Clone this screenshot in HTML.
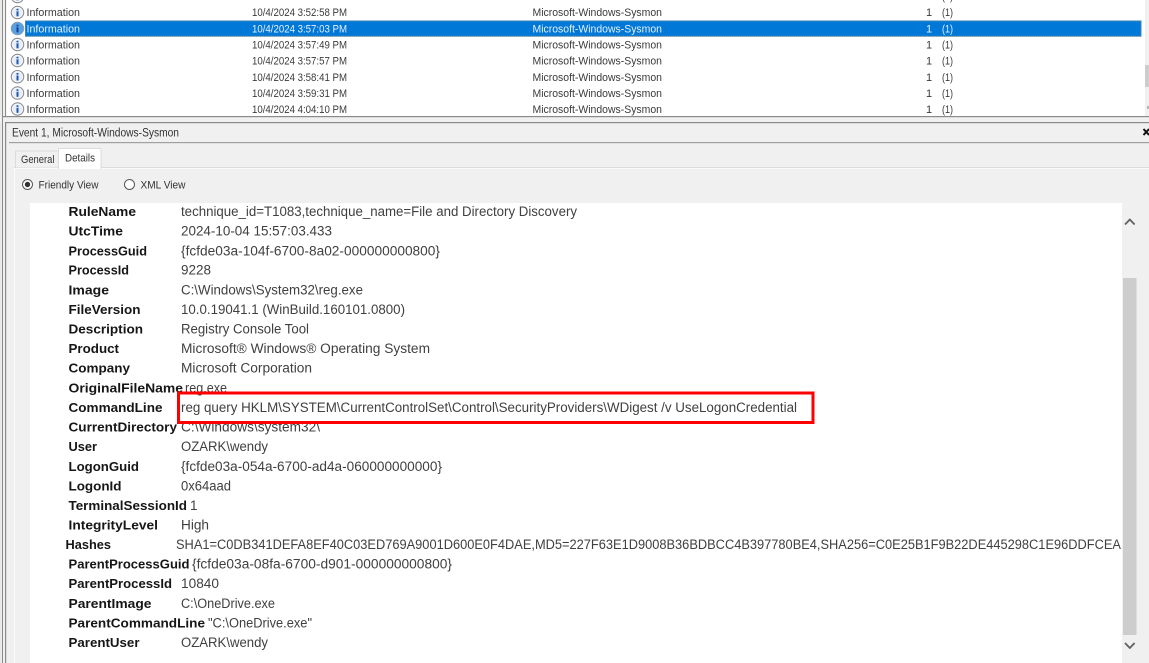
<!DOCTYPE html>
<html>
<head>
<meta charset="utf-8">
<style>
html,body{margin:0;padding:0;background:#f0f0f0;width:1149px;height:663px;overflow:hidden}
svg{display:block;position:absolute;left:0;top:0;filter:blur(.3px)}
text{font-family:"Liberation Sans",sans-serif}
.l text{font-size:11px;fill:#3a3a3a}
.s text{fill:#e4f0fb}
.k text{font-size:13px;font-weight:bold;fill:#161616}
.v text{font-size:13.5px;fill:#404040}
.t{font-size:11px;fill:#333}
</style>
</head>
<body>
<svg width="1149" height="663" viewBox="0 0 1149 663" xmlns="http://www.w3.org/2000/svg">
<defs>
<g id="ic">
<circle cx="0" cy="0" r="6.2" fill="#f7f9fc" stroke="#8b8f94" stroke-width="1.1"/>
<circle cx="0" cy="0" r="4.6" fill="#e6eef8"/>
<rect x="-1" y="-1.2" width="2" height="5" fill="#1f55b0"/>
<rect x="-1" y="-3.7" width="2" height="1.6" fill="#1f55b0"/>
</g>
<g id="ics">
<circle cx="0" cy="0" r="6.2" fill="#5a9fe0" stroke="#7f9fc4" stroke-width="1.1"/>
<rect x="-1" y="-1.2" width="2" height="5" fill="#123f95"/>
<rect x="-1" y="-3.7" width="2" height="1.6" fill="#123f95"/>
</g>
</defs>

<!-- window base -->
<rect width="1149" height="663" fill="#f0f0f0"/>
<rect x="0" y="0" width="1.5" height="663" fill="#e8e8e8"/>
<rect x="2" y="0" width="1" height="663" fill="#8a8a8a"/>
<rect x="5" y="0" width="1.2" height="663" fill="#8a8a8a"/>

<!-- list area -->
<rect x="6.2" y="0" width="1142.8" height="116" fill="#fff"/>
<rect x="1145" y="0" width="4" height="116" fill="#f0f0f0"/>
<rect x="1145" y="65" width="4" height="22" fill="#cdcdcd"/>
<rect x="1147" y="106" width="2" height="3" fill="#b5b5b5"/>
<rect x="25" y="20.5" width="1116.5" height="16.2" fill="#0078d7"/>
<rect x="25.5" y="21" width="1115.5" height="15.2" fill="none" stroke="#e8a04a" stroke-width="0.6" stroke-dasharray="1 1"/>

<use href="#ic" x="17.5" y="-3.5"/>
<use href="#ic" x="17.5" y="12.5"/>
<use href="#ics" x="17.5" y="28.5"/>
<use href="#ic" x="17.5" y="44.5"/>
<use href="#ic" x="17.5" y="60.5"/>
<use href="#ic" x="17.5" y="76.7"/>
<use href="#ic" x="17.5" y="93"/>
<use href="#ic" x="17.5" y="109"/>

<g class="l">
<text x="942" y="-0.2" textLength="11" lengthAdjust="spacingAndGlyphs">(1)</text>
<text x="26.5" y="16" textLength="53.5" lengthAdjust="spacingAndGlyphs">Information</text>
<text x="252" y="16" textLength="95" lengthAdjust="spacingAndGlyphs">10/4/2024 3:52:58 PM</text>
<text x="532.5" y="16" textLength="129.5" lengthAdjust="spacingAndGlyphs">Microsoft-Windows-Sysmon</text>
<text x="926" y="16">1</text><text x="942" y="16" textLength="11" lengthAdjust="spacingAndGlyphs">(1)</text>

<g class="s">
<text x="26.5" y="32.3" textLength="53.5" lengthAdjust="spacingAndGlyphs">Information</text>
<text x="252" y="32.3" textLength="95" lengthAdjust="spacingAndGlyphs">10/4/2024 3:57:03 PM</text>
<text x="532.5" y="32.3" textLength="129.5" lengthAdjust="spacingAndGlyphs">Microsoft-Windows-Sysmon</text>
<text x="926" y="32.3">1</text><text x="942" y="32.3" textLength="11" lengthAdjust="spacingAndGlyphs">(1)</text>
</g>

<text x="26.5" y="48.5" textLength="53.5" lengthAdjust="spacingAndGlyphs">Information</text>
<text x="252" y="48.5" textLength="95" lengthAdjust="spacingAndGlyphs">10/4/2024 3:57:49 PM</text>
<text x="532.5" y="48.5" textLength="129.5" lengthAdjust="spacingAndGlyphs">Microsoft-Windows-Sysmon</text>
<text x="926" y="48.5">1</text><text x="942" y="48.5" textLength="11" lengthAdjust="spacingAndGlyphs">(1)</text>

<text x="26.5" y="64.7" textLength="53.5" lengthAdjust="spacingAndGlyphs">Information</text>
<text x="252" y="64.7" textLength="95" lengthAdjust="spacingAndGlyphs">10/4/2024 3:57:57 PM</text>
<text x="532.5" y="64.7" textLength="129.5" lengthAdjust="spacingAndGlyphs">Microsoft-Windows-Sysmon</text>
<text x="926" y="64.7">1</text><text x="942" y="64.7" textLength="11" lengthAdjust="spacingAndGlyphs">(1)</text>

<text x="26.5" y="80.8" textLength="53.5" lengthAdjust="spacingAndGlyphs">Information</text>
<text x="252" y="80.8" textLength="95" lengthAdjust="spacingAndGlyphs">10/4/2024 3:58:41 PM</text>
<text x="532.5" y="80.8" textLength="129.5" lengthAdjust="spacingAndGlyphs">Microsoft-Windows-Sysmon</text>
<text x="926" y="80.8">1</text><text x="942" y="80.8" textLength="11" lengthAdjust="spacingAndGlyphs">(1)</text>

<text x="26.5" y="97" textLength="53.5" lengthAdjust="spacingAndGlyphs">Information</text>
<text x="252" y="97" textLength="95" lengthAdjust="spacingAndGlyphs">10/4/2024 3:59:31 PM</text>
<text x="532.5" y="97" textLength="129.5" lengthAdjust="spacingAndGlyphs">Microsoft-Windows-Sysmon</text>
<text x="926" y="97">1</text><text x="942" y="97" textLength="11" lengthAdjust="spacingAndGlyphs">(1)</text>

<text x="26.5" y="113.2" textLength="53.5" lengthAdjust="spacingAndGlyphs">Information</text>
<text x="252" y="113.2" textLength="95" lengthAdjust="spacingAndGlyphs">10/4/2024 4:04:10 PM</text>
<text x="532.5" y="113.2" textLength="129.5" lengthAdjust="spacingAndGlyphs">Microsoft-Windows-Sysmon</text>
<text x="926" y="113.2">1</text><text x="942" y="113.2" textLength="11" lengthAdjust="spacingAndGlyphs">(1)</text>
</g>

<!-- splitter and title -->
<rect x="0" y="116" width="1149" height="6.6" fill="#f0f0f0"/>
<rect x="2" y="116" width="1147" height="1.2" fill="#8a8a8a"/>
<rect x="5" y="122" width="1144" height="1.2" fill="#8a8a8a"/>
<rect x="2" y="116" width="1" height="7" fill="#8a8a8a"/>
<rect x="9" y="142" width="1140" height="1.2" fill="#a0a0a0"/>
<text x="12" y="136.5" textLength="167" lengthAdjust="spacingAndGlyphs" font-size="11.5" fill="#333">Event 1, Microsoft-Windows-Sysmon</text>
<path d="M1143.5 129 L1149 135 M1149 129 L1143.5 135" stroke="#111" stroke-width="2" fill="none"/>

<!-- tabs -->
<rect x="14" y="167" width="1135" height="1" fill="#dcdcdc"/>
<rect x="14" y="168" width="1135" height="1" fill="#fbfbfb"/>
<rect x="14" y="168" width="1" height="495" fill="#fbfbfb"/>
<path d="M15.5 167.5V151H58.5V167.5" fill="#f0f0f0" stroke="#dcdcdc"/>
<path d="M58.5 169V148.5H101V169" fill="#fff" stroke="#dcdcdc"/>
<rect x="59" y="149" width="41.5" height="20" fill="#fff"/>
<text class="t" x="21" y="163" textLength="33.5" lengthAdjust="spacingAndGlyphs">General</text>
<text class="t" x="65" y="161.5" textLength="30" lengthAdjust="spacingAndGlyphs">Details</text>

<!-- radios -->
<circle cx="27.5" cy="184.5" r="5" fill="#fff" stroke="#555" stroke-width="1"/>
<circle cx="27.5" cy="184.5" r="2.7" fill="#333"/>
<text class="t" x="38.5" y="188.5" textLength="60" lengthAdjust="spacingAndGlyphs">Friendly View</text>
<circle cx="129.5" cy="184.5" r="5" fill="#fff" stroke="#555" stroke-width="1"/>
<text class="t" x="140.5" y="188.5" textLength="45" lengthAdjust="spacingAndGlyphs">XML View</text>

<!-- details pane -->
<rect x="30" y="203" width="1092" height="460" fill="#fff"/>
<rect x="1123" y="278" width="13.5" height="357" fill="#cdcdcd"/>
<path d="M1125 224.5 L1129.8 219.5 L1134.6 224.5" fill="none" stroke="#606060" stroke-width="1.8"/>
<path d="M1125 643 L1129.8 648 L1134.6 643" fill="none" stroke="#606060" stroke-width="1.8"/>

<g class="k">
<text x="68.5" y="216" textLength="67.5" lengthAdjust="spacingAndGlyphs">RuleName</text>
<text x="68.5" y="235.5" textLength="54.5" lengthAdjust="spacingAndGlyphs">UtcTime</text>
<text x="68.5" y="255.5" textLength="78.5" lengthAdjust="spacingAndGlyphs">ProcessGuid</text>
<text x="68.5" y="274.5" textLength="60.5" lengthAdjust="spacingAndGlyphs">ProcessId</text>
<text x="68.5" y="294.5" textLength="40.5" lengthAdjust="spacingAndGlyphs">Image</text>
<text x="68.5" y="314" textLength="72" lengthAdjust="spacingAndGlyphs">FileVersion</text>
<text x="68.5" y="333.5" textLength="74.5" lengthAdjust="spacingAndGlyphs">Description</text>
<text x="68.5" y="353" textLength="50.5" lengthAdjust="spacingAndGlyphs">Product</text>
<text x="68.5" y="372.5" textLength="61.5" lengthAdjust="spacingAndGlyphs">Company</text>
<text x="68.5" y="392.5" textLength="114.5" lengthAdjust="spacingAndGlyphs">OriginalFileName</text>
<text x="68.5" y="412" textLength="94" lengthAdjust="spacingAndGlyphs">CommandLine</text>
<text x="68.5" y="431.5" textLength="108.5" lengthAdjust="spacingAndGlyphs">CurrentDirectory</text>
<text x="68.5" y="451" textLength="28.5" lengthAdjust="spacingAndGlyphs">User</text>
<text x="68.5" y="471" textLength="70.5" lengthAdjust="spacingAndGlyphs">LogonGuid</text>
<text x="68.5" y="490.5" textLength="53" lengthAdjust="spacingAndGlyphs">LogonId</text>
<text x="68.5" y="510" textLength="118.5" lengthAdjust="spacingAndGlyphs">TerminalSessionId</text>
<text x="68.5" y="529.5" textLength="89.5" lengthAdjust="spacingAndGlyphs">IntegrityLevel</text>
<text x="65.5" y="549" textLength="45.5" lengthAdjust="spacingAndGlyphs">Hashes</text>
<text x="68.5" y="568.5" textLength="121" lengthAdjust="spacingAndGlyphs">ParentProcessGuid</text>
<text x="68.5" y="588" textLength="103.5" lengthAdjust="spacingAndGlyphs">ParentProcessId</text>
<text x="68.5" y="608" textLength="83" lengthAdjust="spacingAndGlyphs">ParentImage</text>
<text x="68.5" y="627.5" textLength="136.5" lengthAdjust="spacingAndGlyphs">ParentCommandLine</text>
<text x="68.5" y="647" textLength="71" lengthAdjust="spacingAndGlyphs">ParentUser</text>
</g>

<g class="v">
<text x="181" y="216" textLength="396" lengthAdjust="spacingAndGlyphs">technique_id=T1083,technique_name=File and Directory Discovery</text>
<text x="181" y="235.5" textLength="151" lengthAdjust="spacingAndGlyphs">2024-10-04 15:57:03.433</text>
<text x="181" y="255.5" textLength="259" lengthAdjust="spacingAndGlyphs">{fcfde03a-104f-6700-8a02-000000000800}</text>
<text x="181" y="274.5" textLength="30" lengthAdjust="spacingAndGlyphs">9228</text>
<text x="181" y="294.5" textLength="182" lengthAdjust="spacingAndGlyphs">C:\Windows\System32\reg.exe</text>
<text x="181" y="314" textLength="224" lengthAdjust="spacingAndGlyphs">10.0.19041.1 (WinBuild.160101.0800)</text>
<text x="181" y="333.5" textLength="128" lengthAdjust="spacingAndGlyphs">Registry Console Tool</text>
<text x="181" y="353" textLength="249" lengthAdjust="spacingAndGlyphs">Microsoft® Windows® Operating System</text>
<text x="181" y="372.5" textLength="131" lengthAdjust="spacingAndGlyphs">Microsoft Corporation</text>
<text x="185" y="392.5" textLength="42" lengthAdjust="spacingAndGlyphs">reg.exe</text>
<text x="181" y="412" textLength="616" lengthAdjust="spacingAndGlyphs">reg query HKLM\SYSTEM\CurrentControlSet\Control\SecurityProviders\WDigest /v UseLogonCredential</text>
<text x="181" y="431.5" textLength="139" lengthAdjust="spacingAndGlyphs">C:\Windows\system32\</text>
<text x="181" y="451" textLength="87" lengthAdjust="spacingAndGlyphs">OZARK\wendy</text>
<text x="181" y="471" textLength="261" lengthAdjust="spacingAndGlyphs">{fcfde03a-054a-6700-ad4a-060000000000}</text>
<text x="181" y="490.5" textLength="50" lengthAdjust="spacingAndGlyphs">0x64aad</text>
<text x="190" y="510">1</text>
<text x="181" y="529.5" textLength="28" lengthAdjust="spacingAndGlyphs">High</text>
<text x="176" y="549" textLength="945" lengthAdjust="spacingAndGlyphs">SHA1=C0DB341DEFA8EF40C03ED769A9001D600E0F4DAE,MD5=227F63E1D9008B36BDBCC4B397780BE4,SHA256=C0E25B1F9B22DE445298C1E96DDFCEA</text>
<text x="192" y="568.5" textLength="260" lengthAdjust="spacingAndGlyphs">{fcfde03a-08fa-6700-d901-000000000800}</text>
<text x="181" y="588" textLength="38" lengthAdjust="spacingAndGlyphs">10840</text>
<text x="181" y="608" textLength="94" lengthAdjust="spacingAndGlyphs">C:\OneDrive.exe</text>
<text x="208" y="627.5" textLength="104" lengthAdjust="spacingAndGlyphs">"C:\OneDrive.exe"</text>
<text x="181" y="647" textLength="87" lengthAdjust="spacingAndGlyphs">OZARK\wendy</text>
</g>

<!-- red highlight -->
<rect x="178.5" y="393" width="634.5" height="29.5" fill="none" stroke="#ff0000" stroke-width="3"/>
</svg>
</body>
</html>
